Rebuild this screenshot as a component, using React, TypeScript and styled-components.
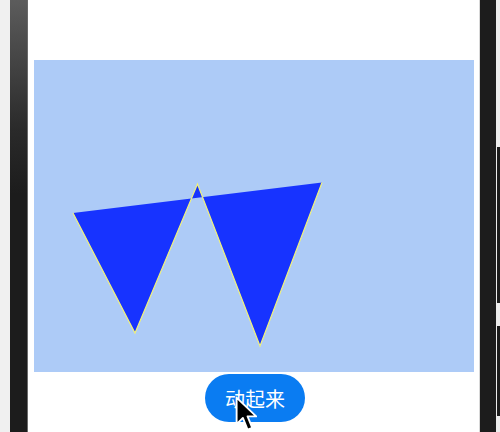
import React from "react";
import styled, { createGlobalStyle } from "styled-components";

const GlobalStyle = createGlobalStyle`
  html, body {
    margin: 0;
    padding: 0;
    background: #f2f2f2;
  }
  body {
    font-family: "Noto Sans CJK SC", "Noto Sans", sans-serif;
  }
  * {
    box-sizing: border-box;
  }
`;

const Device = styled.div`
  position: relative;
  display: flex;
  flex-direction: row;
  width: 500px;
  height: 432px;
  overflow: hidden;
`;

const Gutter = styled.div`
  width: 10px;
  flex-shrink: 0;
  background: #f0f0f0;
`;

const LeftBezel = styled.div`
  width: 18px;
  flex-shrink: 0;
  background: linear-gradient(180deg, #5c5c5c 0%, #2a2a2a 30%, #1c1c1c 45%, #1c1c1c 100%);
  border-right: 1px solid #6a6a6a;
`;

const Screen = styled.div`
  width: 452px;
  flex-shrink: 0;
  display: flex;
  flex-direction: column;
  align-items: center;
  background: #ffffff;
  padding-top: 60px;
  border-right: 1px solid #d8d8d8;
`;

const Canvas = styled.svg`
  display: block;
  align-self: flex-start;
  width: 440px;
  height: 312px;
  margin-left: 6px;
  background: #adcbf7;
`;

const ActionButton = styled.button`
  margin-top: 2px;
  margin-left: 3px;
  width: 100px;
  height: 48px;
  border: none;
  border-radius: 24px;
  background: #0a7cf2;
  color: #ffffff;
  font-family: "Noto Sans CJK SC", "Noto Sans", sans-serif;
  font-size: 20px;
  cursor: pointer;
`;

const RightBezel = styled.div`
  width: 16px;
  flex-shrink: 0;
  background: #1c1c1c;
`;

const RightEdge = styled.div`
  flex: 1;
  display: flex;
  flex-direction: column;
  background: #ececec;
  padding-top: 147px;
  padding-left: 1px;
  gap: 23px;
`;

const SideKey = styled.div<{ $h: number }>`
  height: ${(p) => p.$h}px;
  background: #1c1c1c;
`;

const Pointer = styled.svg`
  position: absolute;
  left: 235px;
  top: 396px;
  width: 22px;
  height: 36px;
`;

export default function App() {
  return (
    <>
      <GlobalStyle />
      <Device>
        <Gutter />
        <LeftBezel />
        <Screen>
          <Canvas viewBox="0 0 440 312">
            <path
              d="M39 153 L101 273 L163.5 124 L226 286 L288 122.5"
              fill="#1733ff"
              stroke="#f2f27a"
              strokeWidth="1.2"
              strokeLinejoin="miter"
            />
          </Canvas>
          <ActionButton>动起来</ActionButton>
        </Screen>
        <RightBezel />
        <RightEdge>
          <SideKey $h={156} />
          <SideKey $h={90} />
        </RightEdge>
        <Pointer viewBox="0 0 14 23">
          <path
            d="M1 1 L1 18 L5 14 L8 21.5 L11 20.3 L8 13 L13.5 13 Z"
            fill="#000000"
            stroke="#ffffff"
            strokeWidth="1.2"
            strokeLinejoin="round"
          />
        </Pointer>
      </Device>
    </>
  );
}
